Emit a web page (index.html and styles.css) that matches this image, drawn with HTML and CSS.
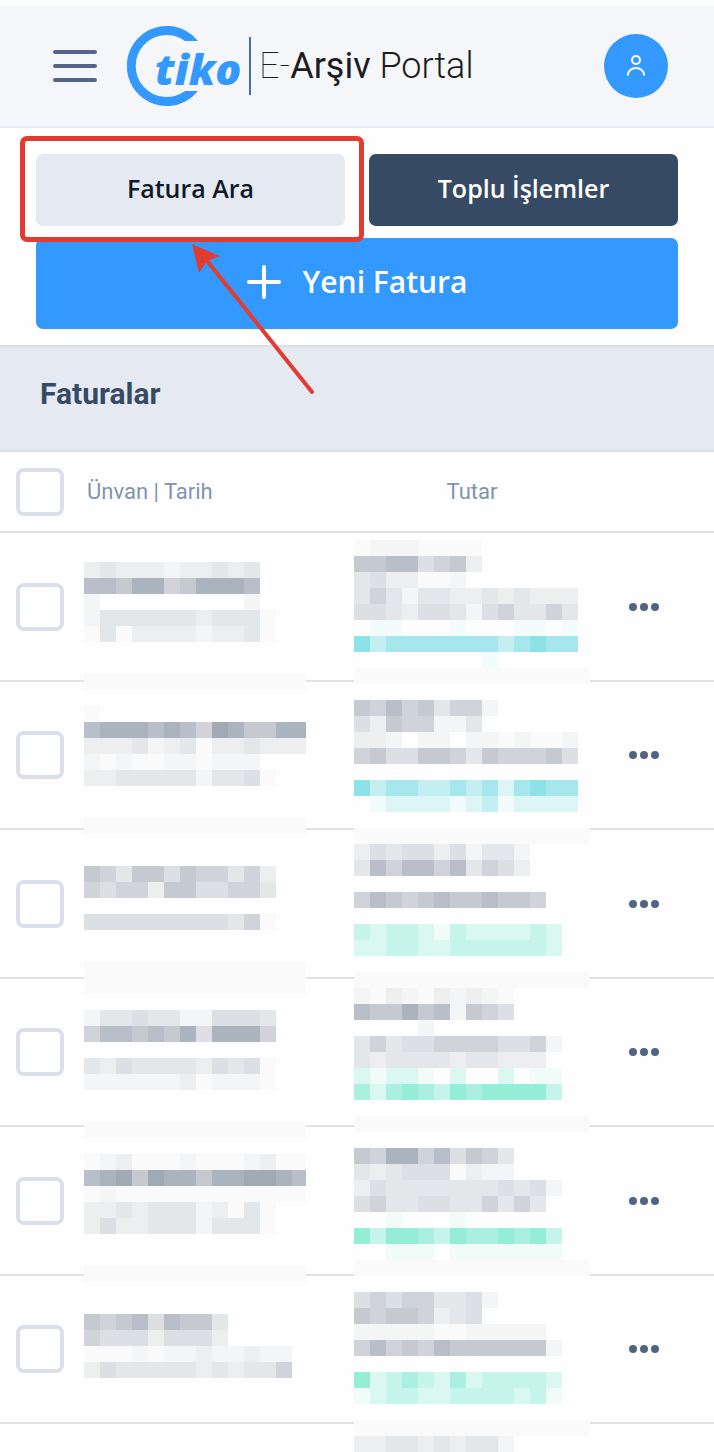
FILE: index.html
```
<!DOCTYPE html>
<html lang="tr">

<head>
  <title>E-Arşiv Portal</title>
  <meta charset="utf-8" />
  <meta name="viewport" content="width=device-width, initial-scale=1.0">
  <link rel="stylesheet" href="styles.css">
</head>

<body>
  <header class="topbar">
    <button class="menuButton" aria-label="Menü"><span></span><span></span><span></span></button>
    <a class="logo" href="#" aria-label="tiko E-Arşiv Portal">
      <svg class="logoMark" width="116" height="80" viewBox="0 0 116 80">
        <path fill="#3399ff" d="M71 15A40 40 0 1 0 71 65L58 65A31 31 0 1 1 58 15Z" />
        <text class="logoText" x="28" y="59">tiko</text>
      </svg>
      <span class="logoLine"></span>
      <span class="logoName"><span class="thin">E-</span><span class="medium">Arşiv</span> Portal</span>
    </a>
    <button class="userButton" aria-label="Hesap">
      <svg width="22" height="24" viewBox="0 0 22 24" fill="none" stroke="#fff" stroke-width="2">
        <circle cx="11" cy="6" r="4" />
        <path d="M3 21.500v-1a8 6.500 0 0 1 16 0v1" />
      </svg>
    </button>
  </header>

  <section class="actions">
    <button class="action light">Fatura Ara</button>
    <button class="action dark">Toplu İşlemler</button>
    <button class="action primary">
      <svg width="34" height="34" viewBox="0 0 34 34" stroke="#fff" stroke-width="4" stroke-linecap="round">
        <path d="M17 2v30M2 17h30" />
      </svg>
      Yeni Fatura
    </button>
    <div class="highlight"></div>
    <svg class="arrow" width="126" height="152" viewBox="0 0 126 152">
      <path d="M16 18L120 148" stroke="#e03c31" stroke-width="4" stroke-linecap="round" />
      <path d="M0 0L28 12L15 17L7 29Z" fill="#e03c31" />
    </svg>
  </section>

  <h1 class="title">Faturalar</h1>

  <main class="list">
    <table class="invoices">
      <colgroup>
        <col class="colCheck">
        <col class="colName">
        <col class="colAmount">
        <col>
      </colgroup>
      <thead>
        <tr>
          <th><input type="checkbox" class="check" aria-label="Tümünü seç"></th>
          <th class="name">Ünvan | Tarih</th>
          <th class="amount">Tutar</th>
          <th></th>
        </tr>
      </thead>
      <tbody id="rows"></tbody>
    </table>
  </main>
  <script src="script.js"></script>
</body>

</html>
```
FILE: styles.css
```
html,
body {
  height: 100%;
  margin: 0;
}

body {
  display: flex;
  flex-direction: column;
  box-sizing: border-box;
  padding-top: 6px;
  overflow: hidden;
  background-color: #fefefe;
  font-family: Roboto, "Liberation Sans", sans-serif;
  color: #364a63;
}

button {
  padding: 0;
  border: none;
  background: none;
  font: inherit;
  cursor: pointer;
}

.topbar {
  display: flex;
  flex: none;
  align-items: center;
  height: 120px;
  padding: 0 46px 0 53px;
  border-bottom: 2px solid #e5e9f2;
  background-color: #f5f6fa;
}

.menuButton {
  display: flex;
  flex-direction: column;
  gap: 10px;
  width: 44px;
}

.menuButton span {
  height: 4px;
  border-radius: 2px;
  background-color: #56648a;
}

.logo {
  display: flex;
  align-items: center;
  margin-left: 30px;
  color: #1c1c1c;
  text-decoration: none;
}

.logoText {
  font: italic 800 43px "Open Sans", sans-serif;
  fill: #3399ff;
}

.logoLine {
  width: 2px;
  height: 58px;
  margin: 0 8px 0 6px;
  background-color: #4373a8;
}

.logoName {
  font-size: 36px;
  font-weight: 300;
  line-height: 56px;
  white-space: nowrap;
}

.thin {
  font-weight: 100;
}

.medium {
  font-weight: 400;
}

.userButton {
  display: flex;
  align-items: center;
  justify-content: center;
  width: 64px;
  height: 64px;
  margin-left: auto;
  border-radius: 50%;
  background-color: #3399ff;
}

.actions {
  position: relative;
  display: grid;
  flex: none;
  grid-template-columns: 1fr 1fr;
  gap: 12px 24px;
  padding: 26px 36px 16px;
}

.action {
  height: 72px;
  padding-bottom: 4px;
  border-radius: 7px;
  font: 600 25px "Open Sans", sans-serif;
}

.light {
  background-color: #e5e9f2;
  color: #101928;
}

.dark {
  background-color: #364a63;
  color: #fff;
}

.primary {
  display: flex;
  grid-column: 1 / span 2;
  align-items: center;
  justify-content: center;
  gap: 22px;
  height: 91px;
  background-color: #3399ff;
  color: #fff;
  font-size: 30px;
}

.highlight {
  position: absolute;
  top: 8px;
  left: 20px;
  box-sizing: border-box;
  width: calc(50% - 13px);
  height: 106px;
  border: 5px solid #e03c31;
  border-radius: 7px;
}

.arrow {
  position: absolute;
  top: 116px;
  left: 192px;
}

.title {
  flex: none;
  height: 105px;
  box-sizing: border-box;
  margin: 0;
  padding: 24px 40px;
  border-top: 2px solid #dbdfea;
  background-color: #e5e9f2;
  font-size: 30px;
  line-height: 46px;
}

.list {
  flex: 1;
  min-height: 0;
  overflow: hidden;
  border-top: 2px solid #dbdfe6;
}

.invoices {
  width: 100%;
  table-layout: fixed;
  border-spacing: 0;
}

.colCheck {
  width: 84px;
}

.colName {
  width: 270px;
}

.colAmount {
  width: 236px;
}

.invoices th,
.invoices td {
  position: relative;
  box-sizing: border-box;
  height: 148px;
  padding: 0;
  border-bottom: 2px solid #dfe1e5;
}

.invoices tr:nth-child(odd) td {
  height: 149px;
}

.invoices tr:nth-child(n) th {
  height: 81px;
  color: #8094ae;
  font-size: 22px;
  font-weight: 400;
}

.invoices .name {
  text-align: left;
  text-indent: 3px;
}

.amount {
  text-align: center;
}

.check {
  display: block;
  box-sizing: border-box;
  width: 48px;
  height: 48px;
  margin: 0 0 0 16px;
  border: 4px solid #dbdfea;
  border-radius: 8px;
  background-color: #fff;
  appearance: none;
}

.more {
  display: flex;
  gap: 3px;
  margin-left: 39px;
  padding: 8px 0;
}

.more span {
  width: 8px;
  height: 8px;
  border-radius: 50%;
  background-color: #526484;
}

/* pixelated masks lie over the cells and their borders */
.mask {
  position: absolute;
  z-index: 1;
  left: 0;
}

.maskName {
  top: 29px;
}

.maskAmount {
  top: 7px;
}
```
FILE: script.js
```
const SIZE = 16;
const colors = {
  a: "#fafafb", b: "#f4f5f6", c: "#edeef0", d: "#e4e7ea", e: "#dcdfe3",
  f: "#d0d4da", g: "#c5cad1", h: "#b8bfc8", i: "#abb3be", j: "#a0a9b4",
  p: "#f3fcfd", q: "#dcf5f7", r: "#c3eff2", s: "#a5e7ec", t: "#8fe1e8",
  v: "#f1fcf9", w: "#dbf8f0", x: "#c5f4e8", y: "#abf0df", z: "#96edd5",
};

// one string per 16px line, one letter per square
const names = [
  "cdcccbccdcd", "hhgiifgiiih", "b.........b", "bddddddcddda", "adaccccbccda", "", "",
  "aaaaaaaaaaaaaa", "", "a", "hiiihihfjiggii", "cccdbcdaccdccc", "babaabbabbb", "ccdddddbddea", "", "",
  "aaaaaaaaaaaaaa", "", "", "gfdggegffdfc", "feffcggeeffd", "", "eeeeeeeeedfa", "", "",
  "aaaaaaaaaaaaaa", "aaaaaaaaaaaaaa", "", "bddeddbbeeed", "fhhghgieiiif", "", "dceddddcedea", "bbbbbbcabbba", "", "",
  "aaaaaaaaaaaaaa", "", "abcaaabaaabcaa", "hijgjiigiijjih", "abaaaaaaaaaaaa", "ccdcdddbcada", "ceccdddbddda", "", "",
  "aaaaaaaaaaaaaa", "", "", "gfghehggd", "feeeceeec", "aaababbcbbcbb", "cedddddcdcddf",
];

const amounts = [
  "abbbaaaa", "gghhefgc", "deccaab", "dfdbddccdcdccc", "eedceedbefddfd", ".pp...p...pp.p", "trsssssssrstss", "........p",
  "aaaaaaaaaaaaaaa", "", "gfhfgdffb", "ecgffbbd", "ccb.bb.bbabaab", "fgeeggfdgfffge", "", "trssrrsrsqstss", ".pqqqqpqrpqqqq", "",
  "aaaaaaaaaaaaaaa", "cedeecebddb", "dhfhhfhdfec", "", "fhgfghgghggf", "", "xwxxwvxwwwwxw", "wwxxwwxxxxxxw", "",
  "aaaaaaaaaaaaaaa", "bacbacbcba", "hggighbgfe", "....b", "dfdeeffffeefb", "dcddddcddccc", "wvwwv.w..w.vv", "ywyzyxzyzzzzx", "",
  "aaaaaaaaaaaaaaa", "", "gfiifhegfd", "dcdeeeacbb", "cedddddddedeb", "efddeeddfdfd", "..v...v", "zxzzyxzyyzyzx", "..vvv.vvvvvvv",
  "aaaaaaaaaaaaaaa", "", "efeffddeb", "gfggfcde", "bbbbbaabbbbb", "fhfgfhggggggb", "", "zwxyxwywxxxxw", "vwxxwwxxxxwxv", "",
  "aaaaaaaaaaaaaaa", "ccddcdcddb",
];

function mask(lines, width, className) {
  let squares = "";
  lines.forEach((line, y) => {
    [...line].forEach((c, x) => {
      if (colors[c]) {
        squares += `<rect x="${x * SIZE}" y="${y * SIZE}" width="${SIZE}" height="${SIZE}" fill="${colors[c]}"/>`;
      }
    });
  });
  return `<svg class="mask ${className}" width="${width}" height="${lines.length * SIZE}" shape-rendering="crispEdges" aria-hidden="true">${squares}</svg>`;
}

const rows = document.getElementById("rows");
for (let i = 0; i < 7; i++) {
  rows.insertAdjacentHTML("beforeend", `<tr>
    <td><input type="checkbox" class="check" aria-label="Fatura ${i + 1}"></td>
    <td>${i == 0 ? mask(names, 222, "maskName") : ""}</td>
    <td>${i == 0 ? mask(amounts, 236, "maskAmount") : ""}</td>
    <td><button class="more" aria-label="İşlemler"><span></span><span></span><span></span></button></td>
  </tr>`);
}
```
